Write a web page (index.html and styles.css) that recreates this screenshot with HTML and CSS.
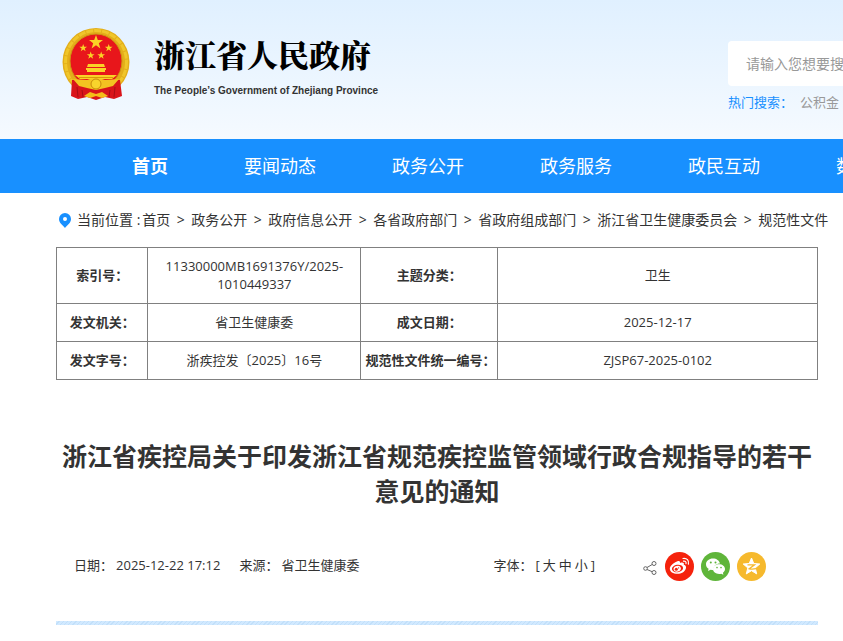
FILE: index.html
```html
<!DOCTYPE html>
<html lang="zh-CN">
<head>
<meta charset="utf-8">
<title>浙江省人民政府</title>
<link rel="stylesheet" href="styles.css">
</head>
<body>
<header class="header">
  <a class="brand" href="#">
    <svg class="emblem" viewBox="0 0 68 74" aria-hidden="true">
      <ellipse cx="34" cy="35" rx="33.500" ry="34" fill="#e3ae1a"/>
      <ellipse cx="34" cy="35" rx="30.500" ry="31.500" fill="none" stroke="#f0c62a" stroke-width="3" stroke-dasharray="7 1"/>
      <ellipse cx="34" cy="34" rx="26" ry="27" fill="#e8161b" stroke="#cf9413" stroke-width="1"/>
      <g fill="#fad326">
        <path id="star" d="M34 8l1.800 5h5.200l-4.200 3.200 1.600 5.200-4.400-3.200-4.400 3.200 1.600-5.200-4.200-3.200h5.200z"/>
        <use href="#star" transform="translate(2.500 12.500) scale(.55)"/>
        <use href="#star" transform="translate(28 12.500) scale(.55)"/>
        <use href="#star" transform="translate(10 20) scale(.55)"/>
        <use href="#star" transform="translate(20.500 20) scale(.55)"/>
        <path d="M26 37h16l1 3H25zM24 41h20v2H24zM25 43h18v2H25zM13 48h42l-5 4H18z"/>
      </g>
      <path d="M17 50h34v1H17z" fill="#d99708"/>
      <path d="M10 53l15 0c2 5 16 5 18 0l15 0 2 16-8 3-9-2-9 3-9-3-9 2-7-3z" fill="#d9141a"/>
      <path d="M11 52l14 1 3-1 6-1 6 1 3 1 14-1-6 7-8 2-9 2-9-2-8-2z" fill="#f3c321"/>
      <circle cx="34" cy="57" r="5" fill="#f8d42c" stroke="#c88a0b" stroke-width="1"/>
      <path d="M22 69l6-4 6 2 6-2 6 4-6 2-6-2-6 2z" fill="#f4bd18"/>
      <path d="M15 60l1 10M20 63l1 7M48 63l-1 7M53 60l-1 10" stroke="#a90d14" fill="none"/>
    </svg>
    <span class="brand-text">
      <span class="brand-name">浙江省人民政府</span>
      <span class="brand-en">The People’s Government of Zhejiang Province</span>
    </span>
  </a>
  <form class="search">
    <input class="search-input" type="search" aria-label="搜索" placeholder="请输入您想要搜索的内容">
    <div class="hot"><span class="hot-label">热门搜索：</span><a href="#">公积金</a></div>
  </form>
</header>
<nav class="nav">
  <a class="active" href="#">首页</a><a href="#">要闻动态</a><a href="#">政务公开</a><a href="#">政务服务</a><a href="#">政民互动</a><a href="#">数据开放</a>
</nav>
<main class="main">
  <nav class="crumbs">
    <svg class="pin" viewBox="0 0 12 15" aria-hidden="true"><path fill="#1890ff" fill-rule="evenodd" d="M6 0a6 6 0 0 1 6 6c0 4-4 6.500-6 9-2-2.500-6-5-6-9a6 6 0 0 1 6-6zm0 4a2 2 0 1 0 0 4 2 2 0 0 0 0-4z"/></svg>
    <span>当前位置 :</span><a href="#">首页</a><i>&gt;</i><a href="#">政务公开</a><i>&gt;</i><a href="#">政府信息公开</a><i>&gt;</i><a href="#">各省政府部门</a><i>&gt;</i><a href="#">省政府组成部门</a><i>&gt;</i><a href="#">浙江省卫生健康委员会</a><i>&gt;</i><a href="#">规范性文件</a>
  </nav>
  <table class="info">
    <colgroup><col class="c1"><col class="c2"><col class="c3"><col class="c4"></colgroup>
    <tr><th>索引号：</th><td>11330000MB1691376Y/2025-<wbr>1010449337</td><th>主题分类：</th><td>卫生</td></tr>
    <tr><th>发文机关：</th><td>省卫生健康委</td><th>成文日期：</th><td>2025-12-17</td></tr>
    <tr><th>发文字号：</th><td>浙疾控发〔2025〕16号</td><th>规范性文件统一编号：</th><td>ZJSP67-2025-0102</td></tr>
  </table>
  <h1 class="title">浙江省疾控局关于印发浙江省规范疾控监管领域行政合规指导的若干意见的通知</h1>
  <div class="meta">
    <div class="source">
      <span>日期：</span><span class="date">2025-12-22 17:12</span><span>来源：</span><span>省卫生健康委</span>
    </div>
    <div class="sizes"><span>字体：</span><span>[</span><button type="button">大</button><button type="button">中</button><button type="button">小</button><span>]</span></div>
    <div class="share">
      <svg class="share-icon" viewBox="0 0 14 14" aria-hidden="true"><g fill="none" stroke="#666"><circle cx="2.500" cy="7.500" r="1.800"/><circle cx="11" cy="2.500" r="2"/><circle cx="11" cy="11.500" r="2"/><path d="M4 6.500l5.200-3M4 8.500l5.200 2.200"/></g></svg>
      <a href="#" aria-label="微博"><svg viewBox="0 0 29 29"><circle cx="14.500" cy="14.500" r="14.500" fill="#f5220c"/>
        <path fill="#fff" d="M12 9.500c2-1 3.500-.4 3 1.500 2.500-1 4.500-.3 3.800 1.800 2 .6 2.700 2 2 3.900-1 3-4.300 5-8.300 5-4.500 0-7.700-2-7.700-5 0-2.700 4-6 7.200-7.200z"/>
        <ellipse cx="12.500" cy="16.500" rx="5.600" ry="3.700" transform="rotate(-8 12.500 16.500)" fill="#f5220c"/>
        <ellipse cx="12.200" cy="16.700" rx="3.700" ry="2.900" transform="rotate(-15 12.200 16.700)" fill="#fff"/>
        <circle cx="11.300" cy="17.300" r="1.500" fill="#f5220c"/><circle cx="13.600" cy="15.900" r=".6" fill="#f5220c"/>
        <path fill="none" stroke="#fff" stroke-width="1.200" stroke-linecap="round" d="M18 6.500c3.800-.7 6.300 2 5.400 5.600M18.500 9.200c1.800-.3 2.900.8 2.500 2.400"/></svg></a>
      <a href="#" aria-label="微信"><svg viewBox="0 0 29 29"><circle cx="14.500" cy="14.500" r="14.500" fill="#5fb53a"/>
        <path fill="#fff" d="M12 6.500c-4 0-7 2.500-7 5.700 0 2 1 3.500 2.600 4.600l-.6 2.300 2.600-1.300 3 .4c-.6-4 2.700-6.700 6.400-6.700-.7-3-3.500-5-7-5z"/>
        <path fill="#fff" d="M18 12.300c3.500 0 6 2.100 6 4.800 0 1.600-.8 2.800-2.100 3.700l.5 2-2.200-1.100c-4.500 1-8.200-1.400-8.200-4.600 0-2.700 2.600-4.800 6-4.800z"/>
        <g fill="#5fb53a"><circle cx="9.800" cy="10.500" r="1"/><circle cx="14.500" cy="10.500" r="1"/><circle cx="16" cy="15.600" r=".8"/><circle cx="20" cy="15.600" r=".8"/></g></svg></a>
      <a href="#" aria-label="QQ空间"><svg viewBox="0 0 29 29"><circle cx="14.500" cy="14.500" r="14.500" fill="#f6b92d"/>
        <path fill="#fff" stroke="#fff" stroke-linejoin="round" d="M14.500 6l2.300 5.500 6 .5-4.600 3.900 1.500 6-5.200-3.200-5.200 3.200 1.500-6L6.200 12l6-.5z"/>
        <path fill="none" stroke="#f6b92d" stroke-width="1.300" d="M10.500 12.800h7l-5.200 4c2.500.6 4.500.4 6.700-.1"/></svg></a>
    </div>
  </div>
  <div class="stripe"></div>
</main>
</body>
</html>
```
FILE: styles.css
```css
* { box-sizing: border-box; }
body {
  margin: 0;
  overflow-x: hidden;
  background: #fff;
  color: #333;
  font-family: "Open Sans", "Noto Sans CJK SC", sans-serif;
  font-size: 13px;
  line-height: 18px;
}
a { color: inherit; text-decoration: none; }
svg { display: block; }

.header {
  display: grid;
  grid-template-columns: minmax(0, 1fr) 115px;
  height: 139px;
  padding-left: 62px;
  overflow: hidden;
  background: linear-gradient(#e0f0ff, #f5faff);
}
.brand { display: flex; align-items: flex-start; gap: 24px; padding-top: 27px; }
.emblem { width: 68px; height: 74px; }
.brand-text { display: flex; flex-direction: column; gap: 8px; padding-top: 6px; white-space: nowrap; }
.brand-name {
  color: #000;
  font-family: "Noto Serif CJK SC", "Noto Sans CJK SC", serif;
  font-size: 31px;
  font-weight: 900;
  line-height: 42px;
}
.brand-en { font-family: "Liberation Sans", sans-serif; font-size: 10px; font-weight: 700; line-height: 16px; }

.search { padding-top: 41px; }
.search-input {
  display: block;
  width: 340px;
  height: 45px;
  padding: 0 18px;
  border: 0;
  border-radius: 4px;
  background: #fff;
  font-family: inherit;
  font-size: 14px;
}
.search-input::placeholder { color: #999; opacity: 1; }
.hot { display: flex; gap: 7px; padding-top: 7px; white-space: nowrap; color: #999; }
.hot-label { color: #1890ff; }

.nav {
  display: flex;
  height: 54px;
  padding-left: 94px;
  overflow: hidden;
  background: #1890ff;
  color: #fff;
  font-size: 18px;
  line-height: 54px;
  white-space: nowrap;
}
.nav a { flex: none; padding: 0 38px; }
.nav .active { font-weight: 700; }

.main { padding: 0 25px 0 56px; }
.crumbs {
  display: flex;
  align-items: center;
  height: 54px;
  padding-left: 3px;
  font-size: 14px;
  white-space: nowrap;
}
.crumbs i { flex: none; width: 21px; font-style: normal; text-align: center; }
.crumbs a, .crumbs span { flex: none; }
.crumbs span { margin-right: 2px; }
.pin { flex: none; width: 12px; height: 15px; margin-right: 6px; }

.info { width: 100%; border-collapse: collapse; table-layout: fixed; text-align: center; }
.info th, .info td { padding: 9px 4px 10px; border: 1px solid #808080; }
.info th { font-weight: 700; white-space: nowrap; }
.c1 { width: 12%; }
.c2 { width: 28%; }
.c3 { width: 18%; }
.c4 { width: 42%; }

.title { margin: 59px 0 43px; font-size: 25px; font-weight: 700; line-height: 35px; text-align: center; }

.meta { display: flex; align-items: flex-start; padding: 0 52px 0 18px; line-height: 26px; white-space: nowrap; }
.source { display: flex; flex: 1; gap: 3px; }
.date { margin-right: 16px; }
.sizes { display: flex; gap: 3px; margin-right: 48px; }
.sizes button { padding: 0; border: 0; background: none; color: inherit; font: inherit; }
.share { display: flex; align-items: center; gap: 7px; }
.share a { width: 29px; height: 29px; }
.share-icon { width: 14px; height: 14px; margin: 2px 1px 0 0; }

.stripe {
  height: 4px;
  margin-top: 40px;
  background: repeating-linear-gradient(135deg, #d1e9ff 0 2px, #c2e0fa 2px 3px);
}
```
